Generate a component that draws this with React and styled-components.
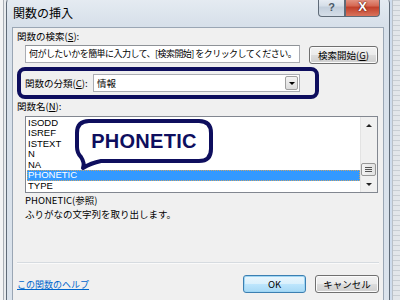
import styled, { createGlobalStyle } from 'styled-components';

const NAVY = '#0e0e5e';

const GlobalStyle = createGlobalStyle`
  html, body {
    margin: 0;
    padding: 0;
  }
  body {
    width: 400px;
    height: 300px;
    overflow: hidden;
    font-family: "Noto Sans CJK JP", "Liberation Sans", sans-serif;
    color: #000;
  }
`;

const Page = styled.div`
  display: flex;
  width: 400px;
  height: 300px;
  overflow: hidden;
`;

const LeftStrip = styled.div`
  width: 6px;
  flex-shrink: 0;
  background: linear-gradient(to right, #f3f4f5 0 3px, #a9afb6 3px 4px, #e8ebee 4px);
`;

const RightStrip = styled.div`
  flex: 1;
  background: linear-gradient(to right, #cfdced 0 2px, #b9bfc6 2px 3px, transparent 3px),
    repeating-linear-gradient(#c9ced4 0 1px, #e3e6ea 1px 5px);
`;

const Window = styled.div`
  width: 384px;
  height: 310px;
  margin-top: -4px;
  flex-shrink: 0;
  box-sizing: border-box;
  border: 1px solid #5f6b78;
  border-radius: 7px 7px 0 0;
  background: linear-gradient(#e6ecf2, #d7e0ea 28px, #dbe3ec);
  display: flex;
  flex-direction: column;
`;

const TitleBar = styled.div`
  height: 30px;
  flex-shrink: 0;
  display: flex;
  align-items: flex-start;
  padding-left: 6px;
`;

const Title = styled.div`
  margin-top: 9px;
  font-size: 12px;
  line-height: 14px;
`;

const CaptionButtons = styled.div`
  margin-left: auto;
  margin-right: 9px;
  display: flex;
  height: 20px;
`;

const CaptionButton = styled.div`
  width: ${p => p.$w}px;
  height: 20px;
  box-sizing: border-box;
  border: 1px solid #5f6b78;
  border-top: none;
  display: flex;
  align-items: center;
  justify-content: center;
  font-family: "Liberation Sans", sans-serif;
  font-weight: bold;
  background: ${p => p.$close
    ? 'linear-gradient(#e9a899, #d66a55 45%, #c2412b 55%, #d9735c)'
    : 'linear-gradient(#eef2f7, #d6dfe9 45%, #c3cfdc 55%, #d5dee8)'};
  color: ${p => p.$close ? '#fff' : '#4b5968'};
  font-size: ${p => p.$close ? 13 : 11}px;
  border-radius: ${p => p.$close ? '0 0 4px 0' : '0 0 0 4px'};
  ${p => p.$close && 'text-shadow: 0 0 2px #5a1a10, 0 0 1px #5a1a10;'}
`;

const Client = styled.div`
  flex: 1;
  margin: 0 5px;
  border: 1px solid #9aa6b4;
  background: #f0f0f0;
  padding: 1px 4px 0 4px;
  display: flex;
  flex-direction: column;
`;

const Label = styled.div`
  font-size: 9.5px;
  line-height: 14px;
  height: 14px;
  white-space: nowrap;
  flex-shrink: 0;
  width: ${p => (p.$w ? `${p.$w}px` : 'auto')};
`;

const SearchRow = styled.div`
  margin-top: 2px;
  height: 19px;
  display: flex;
  align-items: flex-start;
  flex-shrink: 0;
`;

const TextBox = styled.div`
  margin-left: 8px;
  width: 275px;
  height: 18px;
  box-sizing: border-box;
  border: 1px solid #abadb3;
  border-top-color: #8e9297;
  background: #fff;
  font-size: 9px;
  letter-spacing: -0.55px;
  line-height: 16px;
  padding-left: 3px;
  white-space: nowrap;
  overflow: hidden;
`;

const Button = styled.div`
  width: ${p => p.$w}px;
  height: 18px;
  margin-top: ${p => p.$top || 0}px;
  margin-left: ${p => (p.$auto ? 'auto' : `${p.$ml || 0}px`)};
  box-sizing: border-box;
  border: 1px solid ${p => (p.$default ? '#3c7fb1' : '#707070')};
  border-radius: 3px;
  background: ${p => p.$default
    ? 'linear-gradient(#eaf6fd, #d9f0fc 50%, #bee6fd 50%, #a7d9f5)'
    : 'linear-gradient(#f2f2f2, #ebebeb 50%, #dddddd 50%, #cfcfcf)'};
  box-shadow: inset 0 0 0 1px ${p => (p.$default ? '#9fd6f4' : '#fbfbfb')};
  font-size: 9.5px;
  line-height: 16px;
  text-align: center;
  white-space: nowrap;
`;

const Highlight = styled.div`
  margin-top: 3px;
  width: 302px;
  height: 32px;
  box-sizing: border-box;
  border: 4px solid ${NAVY};
  border-radius: 8px;
  display: flex;
  align-items: center;
  padding-left: 4px;
  flex-shrink: 0;
`;

const Select = styled.div`
  width: 207px;
  height: 18px;
  box-sizing: border-box;
  border: 1px solid #abadb3;
  background: #fff;
  display: flex;
  align-items: center;
  padding: 0 1px 0 3px;
  font-size: 9.5px;
`;

const SelectValue = styled.div`
  flex: 1;
  line-height: 16px;
`;

const DropButton = styled.div`
  width: 13px;
  height: 14px;
  box-sizing: border-box;
  border: 1px solid #a0a0a0;
  border-radius: 2px;
  background: linear-gradient(#f4f4f4, #dcdcdc);
  display: flex;
  align-items: center;
  justify-content: center;
  &::after {
    content: '';
    border-left: 3px solid transparent;
    border-right: 3px solid transparent;
    border-top: 3px solid #000;
  }
`;

const ListBox = styled.div`
  position: relative;
  margin: 3px 0 0 8px;
  width: 353px;
  height: 77px;
  box-sizing: border-box;
  border: 1px solid #828790;
  background: #fff;
  display: flex;
  flex-shrink: 0;
  overflow: hidden;
`;

const Rows = styled.div`
  flex: 1;
  padding: 0.5px 0 0 1px;
`;

const Row = styled.div`
  height: 10.5px;
  box-sizing: border-box;
  line-height: 10px;
  padding-left: 1px;
  font-family: "Liberation Sans", sans-serif;
  font-size: 9.5px;
  background: ${p => (p.$selected ? '#3399ff' : 'transparent')};
  color: ${p => (p.$selected ? '#fff' : '#000')};
  outline: ${p => (p.$selected ? '1px dotted #c9a46a' : 'none')};
  outline-offset: -1px;
`;

const ScrollBar = styled.div`
  width: 16px;
  display: flex;
  flex-direction: column;
  align-items: center;
  background: #f0f0f0;
  border-left: 1px solid #e3e3e3;
`;

const ScrollArrow = styled.div`
  height: 16px;
  width: 100%;
  display: flex;
  align-items: center;
  justify-content: center;
  &::after {
    content: '';
    border-left: 3px solid transparent;
    border-right: 3px solid transparent;
    ${p => (p.$down ? 'border-top' : 'border-bottom')}: 3px solid #222;
  }
`;

const Track = styled.div`
  flex: 1;
  width: 100%;
  display: flex;
  flex-direction: column;
  justify-content: flex-end;
`;

const Thumb = styled.div`
  height: 13px;
  margin: 0 1px 0 0;
  box-sizing: border-box;
  border: 1px solid #979797;
  border-radius: 2px;
  background: linear-gradient(to right, #f3f3f3, #e2e2e2);
  display: flex;
  flex-direction: column;
  align-items: center;
  justify-content: center;
  gap: 1px;
`;

const Grip = styled.div`
  width: 7px;
  height: 1px;
  background: #555;
`;

const Bubble = styled.div`
  position: absolute;
  left: 47px;
  top: 0;
  width: 142px;
  height: 48px;
  display: flex;
  align-items: center;
  justify-content: center;
  & > svg {
    position: absolute;
    left: 0;
    top: 0;
  }
`;

const BubbleText = styled.span`
  position: relative;
  font-family: "Liberation Sans", sans-serif;
  font-weight: bold;
  font-size: 20px;
  letter-spacing: 0.3px;
  color: ${NAVY};
  line-height: 20px;
`;

const Description = styled.div`
  padding-left: 8px;
  font-size: 9.5px;
  line-height: 14px;
`;

const Separator = styled.div`
  margin-top: 41px;
  height: 1px;
  background: #d6dbe0;
  border-bottom: 1px solid #fafafa;
  flex-shrink: 0;
`;

const Footer = styled.div`
  margin-top: 11px;
  display: flex;
  align-items: center;
  height: 18px;
`;

const HelpLink = styled.a`
  font-size: 9px;
  color: #0066cc;
  text-decoration: underline;
`;

const items = ['ISODD', 'ISREF', 'ISTEXT', 'N', 'NA', 'PHONETIC', 'TYPE'];

export default function App() {
  return (
    <>
      <GlobalStyle />
      <Page>
        <LeftStrip />
        <Window>
          <TitleBar>
            <Title>関数の挿入</Title>
            <CaptionButtons>
              <CaptionButton $w={27}>?</CaptionButton>
              <CaptionButton $w={35} $close>X</CaptionButton>
            </CaptionButtons>
          </TitleBar>
          <Client>
            <Label>関数の検索(<u>S</u>):</Label>
            <SearchRow>
              <TextBox>何がしたいかを簡単に入力して、[検索開始] をクリックしてください。</TextBox>
              <Button $w={69} $ml={9} $top={1}>検索開始(<u>G</u>)</Button>
            </SearchRow>
            <Highlight>
              <Label $w={68}>関数の分類(<u>C</u>):</Label>
              <Select>
                <SelectValue>情報</SelectValue>
                <DropButton />
              </Select>
            </Highlight>
            <Label>関数名(<u>N</u>):</Label>
            <ListBox>
              <Rows>
                {items.map(name => (
                  <Row key={name} $selected={name === 'PHONETIC'}>{name}</Row>
                ))}
              </Rows>
              <ScrollBar>
                <ScrollArrow />
                <Track>
                  <Thumb>
                    <Grip />
                    <Grip />
                    <Grip />
                  </Thumb>
                </Track>
                <ScrollArrow $down />
              </ScrollBar>
              <Bubble>
                <svg width="142" height="54" viewBox="0 0 142 54">
                  <path
                    d="M16 4 H126 Q138 4 138 16 V32 Q138 44 126 44 H28 Q18 46 10 51 Q12 46 8 40 Q4 36 4 30 V16 Q4 4 16 4 Z"
                    fill="#fff"
                    stroke={NAVY}
                    strokeWidth="4"
                    strokeLinejoin="round"
                  />
                </svg>
                <BubbleText>PHONETIC</BubbleText>
              </Bubble>
            </ListBox>
            <Description>
              <div>PHONETIC(参照)</div>
              <div>ふりがなの文字列を取り出します。</div>
            </Description>
            <Separator />
            <Footer>
              <HelpLink href="#">この関数のヘルプ</HelpLink>
              <Button $w={63} $auto $default>OK</Button>
              <Button $w={64} $ml={9}>キャンセル</Button>
            </Footer>
          </Client>
        </Window>
        <RightStrip />
      </Page>
    </>
  );
}
